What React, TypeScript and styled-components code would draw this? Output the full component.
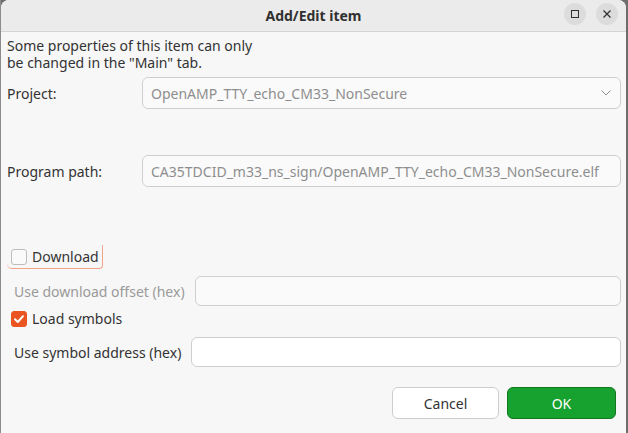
import React, { useState } from 'react';
import styled, { createGlobalStyle } from 'styled-components';

const GlobalStyle = createGlobalStyle`
  html, body {
    margin: 0;
    padding: 0;
    background: #7a7a7a;
  }
  body {
    font-family: 'Noto Sans', 'Open Sans', sans-serif;
    font-size: 14px;
    color: #3d3d3d;
  }
`;

const Screen = styled.div`
  width: 628px;
  height: 433px;
  display: flex;
  overflow: hidden;
  background: linear-gradient(to right, #8c8c8c 0 1px, transparent 1px), #6d6d6d;
`;

const Window = styled.div`
  margin-left: 1px;
  width: 625px;
  height: 433px;
  display: flex;
  flex-direction: column;
  background: #f7f7f7;
  border-top-left-radius: 8px;
  border-top-right-radius: 8px;
  overflow: hidden;
`;

const TitleBar = styled.div`
  height: 31px;
  flex: none;
  display: flex;
  align-items: center;
  justify-content: center;
  position: relative;
  background: #ebebeb;
  border-bottom: 1px solid #d4d4d4;
`;

const Title = styled.div`
  font-weight: 700;
  font-size: 14px;
  color: #303030;
`;

const TitleButtons = styled.div`
  position: absolute;
  right: 8px;
  top: 3px;
  display: flex;
  gap: 10px;
`;

const RoundButton = styled.div`
  width: 22px;
  height: 22px;
  border-radius: 50%;
  background: #dcdcdc;
  display: flex;
  align-items: center;
  justify-content: center;
`;

const Body = styled.div`
  flex: 1;
  display: flex;
  flex-direction: column;
  padding: 5px 5px 0 6px;
`;

const Intro = styled.p`
  margin: 0;
  line-height: 17px;
  color: #333;
`;

const Row = styled.div<{ $top: number; $labelWidth: number }>`
  display: grid;
  grid-template-columns: ${p => p.$labelWidth}px 1fr;
  align-items: center;
  margin-top: ${p => p.$top}px;
`;

const Label = styled.span<{ $dim?: boolean; $indent?: number }>`
  color: ${p => (p.$dim ? '#9a9a9a' : '#333')};
  padding-left: ${p => p.$indent ?? 0}px;
  white-space: nowrap;
`;

const Field = styled.div<{ $height: number; $bg: string; $dim?: boolean }>`
  height: ${p => p.$height}px;
  box-sizing: border-box;
  border: 1px solid #cfcfcf;
  border-radius: 6px;
  background: ${p => p.$bg};
  display: flex;
  align-items: center;
  padding: 0 8px 0 8px;
  color: ${p => (p.$dim ? '#8e8e8e' : '#333')};
  white-space: nowrap;
  overflow: hidden;
`;

const FieldText = styled.span`
  flex: 1;
  overflow: hidden;
`;

const CheckRow = styled.label<{ $top: number; $focused?: boolean }>`
  align-self: flex-start;
  display: flex;
  align-items: center;
  gap: 5px;
  height: 23px;
  margin-top: ${p => p.$top}px;
  padding: 0 3px 0 4px;
  border-right: 1px solid ${p => (p.$focused ? '#f2a489' : 'transparent')};
  border-bottom: 1px solid ${p => (p.$focused ? '#f2a489' : 'transparent')};
  border-radius: 0 0 4px 5px;
  color: #333;
  cursor: default;
`;

const Box = styled.span<{ $checked: boolean }>`
  width: 16px;
  height: 16px;
  box-sizing: border-box;
  border-radius: 3px;
  border: 1px solid ${p => (p.$checked ? '#e95420' : '#bdbdbd')};
  background: ${p => (p.$checked ? '#e95420' : '#fafafa')};
  display: flex;
  align-items: center;
  justify-content: center;
`;

const Footer = styled.div`
  display: flex;
  justify-content: flex-end;
  gap: 8px;
  margin-top: 20px;
  padding-right: 5px;
`;

const Button = styled.button<{ $primary?: boolean }>`
  width: ${p => (p.$primary ? 109 : 107)}px;
  height: 32px;
  border-radius: 6px;
  font-family: inherit;
  font-size: 14px;
  border: 1px solid ${p => (p.$primary ? '#12781f' : '#cdcdcd')};
  background: ${p => (p.$primary ? '#17a22f' : '#ffffff')};
  color: ${p => (p.$primary ? '#ffffff' : '#333')};
`;

const Check = () => (
  <svg width="12" height="12" viewBox="0 0 12 12">
    <path d="M2 6.2 L4.8 9 L10 3.2" fill="none" stroke="#fff" strokeWidth="2" strokeLinecap="round" strokeLinejoin="round" />
  </svg>
);

export default function App() {
  const [download, setDownload] = useState(false);
  const [symbols, setSymbols] = useState(true);

  return (
    <>
      <GlobalStyle />
      <Screen>
        <Window>
          <TitleBar>
            <Title>Add/Edit item</Title>
            <TitleButtons>
              <RoundButton>
                <svg width="10" height="10" viewBox="0 0 10 10">
                  <rect x="1.5" y="1.5" width="7" height="7" fill="none" stroke="#2e2e2e" strokeWidth="1" />
                </svg>
              </RoundButton>
              <RoundButton>
                <svg width="10" height="10" viewBox="0 0 10 10">
                  <path d="M1.5 1.5 L8.5 8.5 M8.5 1.5 L1.5 8.5" stroke="#2e2e2e" strokeWidth="1.2" />
                </svg>
              </RoundButton>
            </TitleButtons>
          </TitleBar>
          <Body>
            <Intro>
              Some properties of this item can only
              <br />
              be changed in the "Main" tab.
            </Intro>
            <Row $top={6} $labelWidth={135}>
              <Label>Project:</Label>
              <Field $height={32} $bg="#fafafa" $dim>
                <FieldText>OpenAMP_TTY_echo_CM33_NonSecure</FieldText>
                <svg width="12" height="8" viewBox="0 0 12 8">
                  <path d="M1.5 1.5 L6 6 L10.5 1.5" fill="none" stroke="#8e8e8e" strokeWidth="1" />
                </svg>
              </Field>
            </Row>
            <Row $top={46} $labelWidth={135}>
              <Label>Program path:</Label>
              <Field $height={32} $bg="#fafafa" $dim>
                <FieldText>CA35TDCID_m33_ns_sign/OpenAMP_TTY_echo_CM33_NonSecure.elf</FieldText>
              </Field>
            </Row>
            <CheckRow $top={58} $focused onClick={() => setDownload(!download)}>
              <Box $checked={download}>{download && <Check />}</Box>
              Download
            </CheckRow>
            <Row $top={7} $labelWidth={188}>
              <Label $dim $indent={7}>Use download offset (hex)</Label>
              <Field $height={30} $bg="#fafafa" />
            </Row>
            <CheckRow $top={1} onClick={() => setSymbols(!symbols)}>
              <Box $checked={symbols}>{symbols && <Check />}</Box>
              Load symbols
            </CheckRow>
            <Row $top={6} $labelWidth={184}>
              <Label $indent={7}>Use symbol address (hex)</Label>
              <Field $height={30} $bg="#ffffff" />
            </Row>
            <Footer>
              <Button>Cancel</Button>
              <Button $primary>OK</Button>
            </Footer>
          </Body>
        </Window>
      </Screen>
    </>
  );
}
